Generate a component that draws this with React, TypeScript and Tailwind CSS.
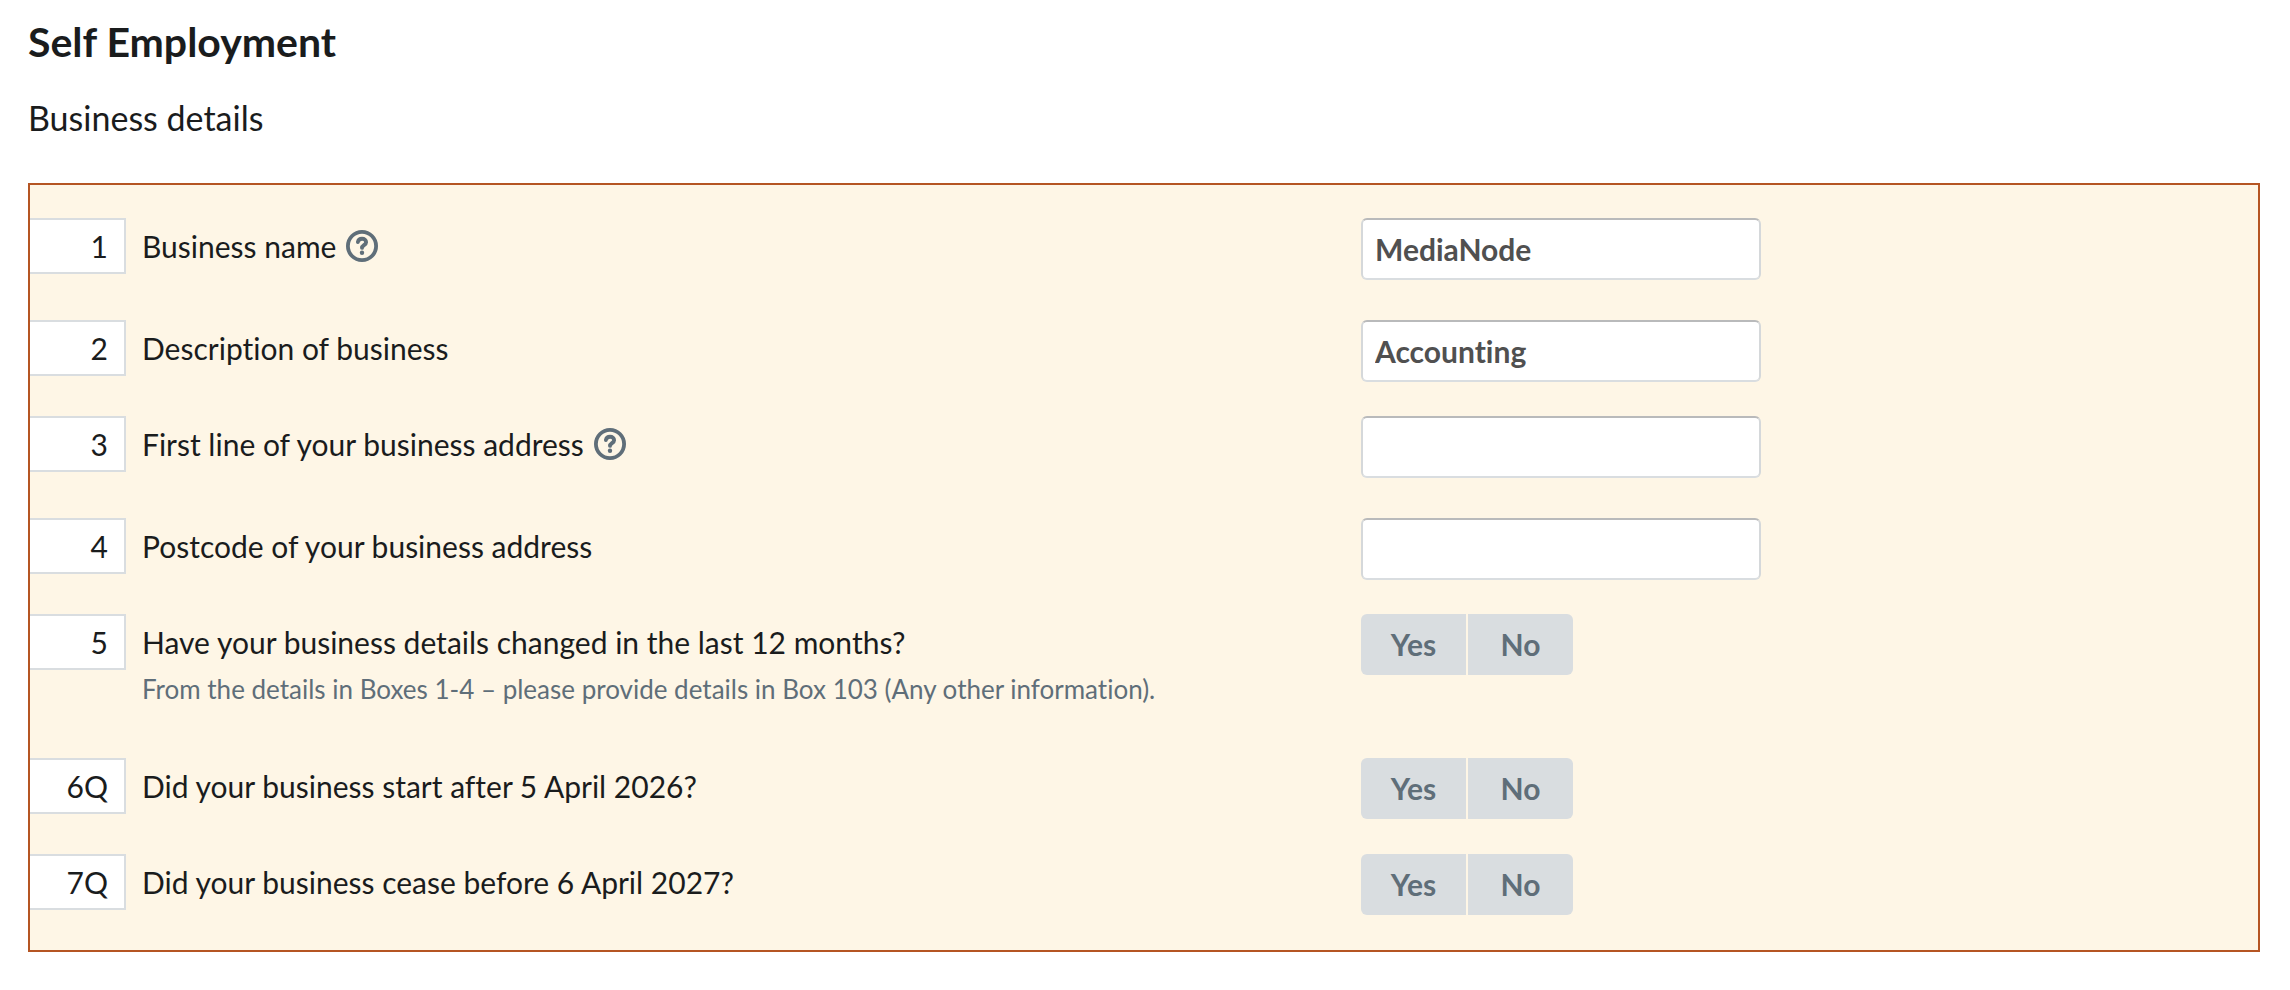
import React from 'react';

const HelpIcon = () => (
  <svg viewBox="0 0 32 32" className="h-8 w-8" fill="none" stroke="currentColor" strokeLinecap="round" aria-hidden="true">
    <circle cx="16" cy="16" r="14.1" strokeWidth="3.8" />
    <path d="M11.9 12C12.3 9.9 13.8 8.8 16 8.8c2.4 0 4.1 1.4 4.1 3.4 0 2.8-4 3.1-4.1 5.6" strokeWidth="3.9" />
    <circle cx="16" cy="22.7" r="2.2" fill="currentColor" stroke="none" />
  </svg>
);

type RowProps = {
  id: string;
  box: string;
  label: string;
  help?: boolean;
  hint?: string;
  children: React.ReactNode;
};

const Row = ({ id, box, label, help, hint, children }: RowProps) => (
  <div className="grid grid-cols-[1331fr_897fr] items-start">
    <div className="flex items-start">
      <div className="h-14 w-24 shrink-0 border-2 border-l-0 border-[#d9dde0] bg-white pr-4 text-right leading-[52px]">
        {box}
      </div>
      <div className="pl-4">
        <div className={help ? 'flex items-center gap-2.5 pb-[46px]' : 'flex items-center gap-2.5'}>
          <label htmlFor={id} id={`${id}-label`} className="leading-[56px]">{label}</label>
          {help && (
            <button type="button" aria-label={`Help with ${label}`} className="text-[#5f6e79]">
              <HelpIcon />
            </button>
          )}
        </div>
        {hint && <p className="pb-[50px] text-[26px] leading-[38px] text-[#5f6e79]">{hint}</p>}
      </div>
    </div>
    <div className="pb-[34px]">{children}</div>
  </div>
);

const TextBox = ({ id, value }: { id: string, value?: string }) => (
  <input
    id={id}
    type="text"
    defaultValue={value}
    className="block h-[62px] w-[400px] rounded-md border-2 border-[#d5d8da] border-t-[#b9babb] border-b-[#d9dde0] bg-white px-3 font-bold text-[#505050]"
  />
);

const YesNo = ({ id }: { id: string }) => (
  <div role="group" aria-labelledby={`${id}-label`} className="flex h-[62px] gap-0.5 font-bold text-[#5f6e79]">
    <button id={id} type="button" className="h-[61px] w-[105px] rounded-l-md bg-[#d9dde0]">Yes</button>
    <button type="button" className="h-[61px] w-[105px] rounded-r-md bg-[#d9dde0]">No</button>
  </div>
);

export default function App() {
  return (
    <main className="bg-white px-7 pt-[18px] pr-[30px] font-['Lato',sans-serif] text-[30px] text-[#1a1c1d] [font-variant-ligatures:none]">
      <h1 className="text-[41px] leading-[48px] font-bold">Self Employment</h1>
      <h2 className="mt-8 text-[34px] leading-[40px]">Business details</h2>

      <form className="mt-[45px] border-2 border-[#b55523] bg-[#fef6e6] pt-[33px]">
        <Row id="name" box="1" label="Business name" help>
          <TextBox id="name" value="MediaNode" />
        </Row>
        <Row id="description" box="2" label="Description of business">
          <TextBox id="description" value="Accounting" />
        </Row>
        <Row id="address" box="3" label="First line of your business address" help>
          <TextBox id="address" />
        </Row>
        <Row id="postcode" box="4" label="Postcode of your business address">
          <TextBox id="postcode" />
        </Row>
        <Row
          id="changed"
          box="5"
          label="Have your business details changed in the last 12 months?"
          hint="From the details in Boxes 1-4 – please provide details in Box 103 (Any other information)."
        >
          <YesNo id="changed" />
        </Row>
        <Row id="started" box="6Q" label="Did your business start after 5 April 2026?">
          <YesNo id="started" />
        </Row>
        <Row id="ceased" box="7Q" label="Did your business cease before 6 April 2027?">
          <YesNo id="ceased" />
        </Row>
      </form>
    </main>
  );
}
